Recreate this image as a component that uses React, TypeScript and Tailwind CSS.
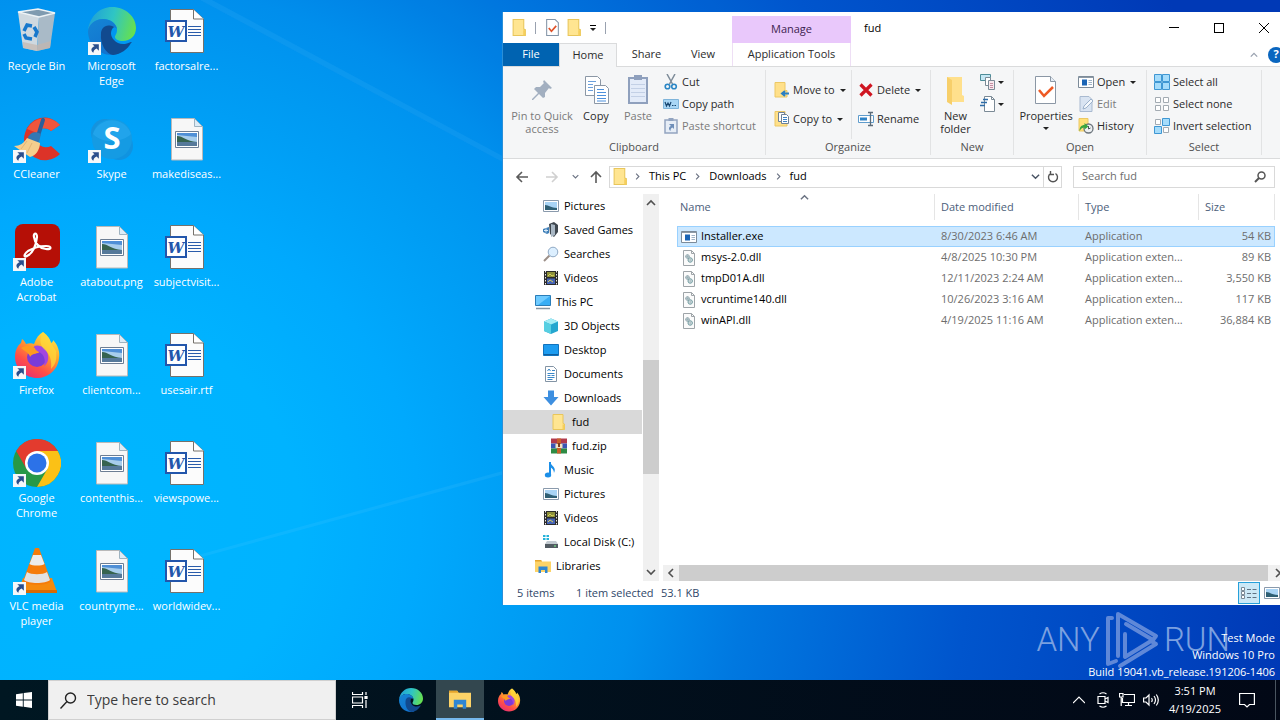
import { ReactNode, useState } from 'react';

/* ---------- Desktop icons (48px) ---------- */

function EdgeIcon({ className = 'size-12' }: { className?: string }) {
  return (
    <svg className={className} viewBox="0 0 48 48">
      <defs>
        <linearGradient id="edgeTop" x1="0" y1="0.3" x2="1" y2="0.5">
          <stop offset="0" stopColor="#1f9fd8" />
          <stop offset="0.5" stopColor="#2fc5c4" />
          <stop offset="1" stopColor="#66e04f" />
        </linearGradient>
        <linearGradient id="edgeLeft" x1="0" y1="0" x2="0.6" y2="1">
          <stop offset="0" stopColor="#1585d4" />
          <stop offset="1" stopColor="#1173cf" />
        </linearGradient>
      </defs>
      <path d="M0 23C2 9 12 0 24 0c14 0 24 10 24 21 0 8-6 13-13 13-5 0-8-2-8-4s2-3 2-7c0-6-6-11-14-11C8 12 3 16 0 23z" fill="url(#edgeTop)" />
      <path d="M0 24c1-7 7-12 15-12 7 0 13 4 14 10-3-3-9-2-11 4-2 9 5 17 15 19-3 2-6 3-9 3C10 48 0 37 0 24z" fill="url(#edgeLeft)" />
      <path d="M13 27c0-6 5-11 13-7-4 3-4 9 0 13 4 5 11 5 17 2 1 0 1 0 0 1-4 7-10 11-18 12C18 47 12 37 13 27z" fill="#114a8f" />
    </svg>
  );
}

function FirefoxIcon({ className = 'size-12' }: { className?: string }) {
  return (
    <svg className={className} viewBox="0 0 48 48">
      <defs>
        <linearGradient id="ffBody" x1="0.8" y1="0" x2="0.2" y2="1">
          <stop offset="0" stopColor="#fff04a" />
          <stop offset="0.35" stopColor="#ffa72b" />
          <stop offset="0.7" stopColor="#ff4f47" />
          <stop offset="1" stopColor="#e52a78" />
        </linearGradient>
      </defs>
      <path d="M30 1c5 4 7 7 8 11 2-1 2-2 2-3 5 5 7 12 6 18-1 12-11 20-22 20S2 38 2 26c0-6 2-11 6-14l1-4c2 1 3 3 4 5 3-1 6-1 8 0 2-6 5-10 9-12z" fill="url(#ffBody)" />
      <circle cx="24" cy="26" r="10" fill="#7b3bd8" />
      <path d="M8 17c6-4 12-1 16 1 3 1 4 3 1 4-4 1-6 1-8 4 0-3-4-5-9-9z" fill="#ff9a1f" />
      <path d="M21 15c6-2 13 2 14 9 1 5-1 9-4 11 2-6 0-12-5-14-3-1-4-3-5-6z" fill="#a246df" />
      <path d="M30 1c5 4 7 7 8 11l5 8c1 8 0 13-5 18 1-9-1-15-7-20-4-4-5-10-1-17z" fill="#ffd83b" opacity="0.75" />
    </svg>
  );
}

function RecycleIcon() {
  return (
    <svg className="size-12" viewBox="0 0 48 48">
      <path d="M5 5l21 5-2 34-14-3z" fill="#cfd9e0" />
      <path d="M26 10l16-4-5 35-13 3z" fill="#a9bac7" />
      <path d="M5 5l20-3 17 4-16 4z" fill="#7f9bb0" stroke="#edf3f6" strokeWidth="1.5" />
      <path d="M10 35l14 3 14-4-1 7-13 3-14-3z" fill="#c4b7ae" opacity="0.7" />
      <g fill="none" stroke="#1778cc" strokeWidth="3.5">
        <path d="M11 24l3-6 5 1" />
        <path d="M21 20l3 5-2 5" />
        <path d="M19 32l-6-1-2-4" />
      </g>
    </svg>
  );
}

function CCleanerIcon() {
  return (
    <svg className="size-12" viewBox="0 0 48 48">
      <path d="M47 10A20 20 0 0 0 12 18a21 21 0 0 0 35 21l-9-8a11 11 0 0 1-16-10c1-8 11-10 16-5z" fill="#dc3328" />
      <path d="M47 10A20 20 0 0 0 14 14l10 4c3-6 10-6 14-2z" fill="#f0563c" />
      <path d="M30 5l-5 16" stroke="#2a5f9b" strokeWidth="4" strokeLinecap="round" />
      <path d="M15 22c3-5 7-6 13-3l-2 8-9 2z" fill="#3278b4" />
      <path d="M14 23l13 5c0 6-4 13-10 14L1 31c6 0 10-3 13-8z" fill="#f5ce8d" />
      <path d="M14 26l-6 8m11-6l-5 10" stroke="#e3b576" />
    </svg>
  );
}

function SkypeIcon() {
  return (
    <svg className="size-12" viewBox="0 0 48 48">
      <circle cx="17" cy="18" r="14" fill="#1593dd" />
      <circle cx="31" cy="31" r="14" fill="#1093e0" />
      <circle cx="24" cy="24" r="20" fill="#159be3" />
      <path d="M5 19a20 20 0 0 1 38 0c-9 9-28 10-38 0z" fill="#2aaaf0" opacity="0.6" />
      <text x="24" y="34" textAnchor="middle" fill="#fff" fontFamily="Open Sans, sans-serif" fontWeight="700" fontSize="31">S</text>
    </svg>
  );
}

function AcrobatIcon() {
  return (
    <svg className="size-12" viewBox="0 0 48 48">
      <rect x="2" y="1" width="45" height="44" rx="8" fill="#b50f06" />
      <path d="M14 33c6-3 9-10 10-19 0-5-4-4-3 0 1 7 6 11 12 12 6 1 6-3 0-3-7 0-13 2-18 5-5 4-4 7-1 5z" fill="none" stroke="#fff" strokeWidth="2.2" strokeLinejoin="round" />
    </svg>
  );
}

function ChromeIcon() {
  return (
    <svg className="size-12" viewBox="0 0 48 48">
      <circle cx="24" cy="24" r="24" fill="#279847" />
      <path d="M3.2 12a24 24 0 0 1 41.6 0H24L13.6 30z" fill="#e33b2e" />
      <path d="M44.8 12A24 24 0 0 1 24 48l10.400-18L24 12z" fill="#fbc116" />
      <circle cx="24" cy="24" r="12" fill="#fff" />
      <circle cx="24" cy="24" r="9.500" fill="#2c72e8" />
    </svg>
  );
}

function VlcIcon() {
  return (
    <svg className="size-12" viewBox="0 0 48 48">
      <path d="M10 31h29l5 14H5z" fill="#f58a0e" />
      <path d="M5 43h39v3H5z" fill="#d86a05" />
      <path d="M22 1h4l12 33c-3 5-25 5-28 0z" fill="#f57c0b" />
      <path d="M20 8h8l3.500 9c-3 2-12 2-15 0z" fill="#ececec" />
      <path d="M14 25c4 3 16 3 20 0l3 8c-4 4-22 4-26 0z" fill="#e2e2e2" />
    </svg>
  );
}

function WordIcon() {
  return (
    <svg className="size-12" viewBox="0 0 48 48">
      <path d="M7.500 2.500h23l10 9.500v33.500h-33z" fill="#fcfcfc" stroke="#75716b" />
      <path d="M30.500 2.500V12h10" fill="#fff" stroke="#75716b" />
      <path d="M25 19.500h13M25 22.500h13M25 25.500h13M25 28.500h13" stroke="#2a5caa" />
      <rect x="3" y="14" width="20" height="20" fill="#fff" stroke="#2356ab" strokeWidth="2" />
      <text x="13" y="30" textAnchor="middle" fill="#2356ab" fontFamily="DejaVu Serif, serif" fontStyle="italic" fontWeight="700" fontSize="15">W</text>
    </svg>
  );
}

function PngIcon() {
  return (
    <svg className="size-12" viewBox="0 0 48 48">
      <path d="M8.500 3.500h23l8 8v33.500h-31z" fill="#f7f7f7" stroke="#b9b9b9" />
      <path d="M31.500 3.500v8h8z" fill="#dcecf7" stroke="#9fb3c0" />
      <path d="M12.500 16.500h23v16h-23z" fill="#fff" stroke="#6d7e94" />
      <path d="M14 18h20v13H14z" fill="#a7cdec" />
      <path d="M14 18h20v4l-20-2z" fill="#4f8fd6" />
      <path d="M14 21c6 0 9 5 20 6v1H14z" fill="#36634f" />
      <path d="M14 27h20v4H14z" fill="#56799a" />
    </svg>
  );
}

function ShortcutBadge() {
  return (
    <svg className="absolute bottom-0 left-0 size-[13px]" viewBox="0 0 12 12">
      <rect width="12" height="12" fill="#f5f7f9" />
      <path d="M4 2h6v6L8 6c-2 1-3 2-3 4-3-2-2-5 1-6z" fill="#2a4e8c" />
    </svg>
  );
}

/* ---------- Small icons (16px) ---------- */

function Svg({ children, className = 'size-4 shrink-0' }: { children: ReactNode; className?: string }) {
  return (
    <svg className={className} viewBox="0 0 16 16" fill="none">
      {children}
    </svg>
  );
}

const FolderIcon = ({ className }: { className?: string }) => (
  <Svg className={className}>
    <path d="M2 .5h10v9l1.500.5v5.500H2z" fill="#ffe591" stroke="#e9c65a" />
    <path d="M11.500 10.500h2v5h-2z" fill="#f6cf5b" />
  </Svg>
);
const CheckDocIcon = ({ className }: { className?: string }) => (
  <Svg className={className}>
    <path d="M2.500.5h8l3 3v12h-11z" fill="#fff" stroke="#8496a8" />
    <path d="M4.500 8.500l2.500 3 4.500-5" stroke="#e0532b" strokeWidth="1.600" />
  </Svg>
);
const PictureIcon = () => (
  <Svg>
    <path d="M.5 2.500h15v11H.5z" fill="#fff" stroke="#8a9aac" />
    <path d="M2 4h12v8H2z" fill="#a9d4f5" />
    <path d="M2 7c4 0 6 3 12 3v2H2z" fill="#2f5f74" />
  </Svg>
);
const GamesIcon = () => (
  <Svg>
    <path d="M6 2l5-2 4 3v7l-4 5-4-3z" fill="#3f474f" />
    <path d="M8 2l4 1v10l-4 2z" fill="#a9b7c4" />
    <path d="M0 7l6-2v6l-2 1-4-2z" fill="#3f7fb8" />
    <path d="M1 8.500h4M3 6.500v4" stroke="#d9ebf8" />
  </Svg>
);
const SearchesIcon = () => (
  <Svg>
    <path d="M1 15l5.500-5.500" stroke="#9c8f88" strokeWidth="2" />
    <circle cx="10" cy="6" r="4.800" fill="#dcefff" stroke="#8fa9c4" />
  </Svg>
);
const VideoIcon = () => (
  <Svg>
    <path d="M1 1h14v14H1z" fill="#2b2b2b" />
    <path d="M4 2h8v5H4z" fill="#8c8f3a" />
    <path d="M4 8.500h8V14H4z" fill="#4663b5" />
    <path d="M2.500 1v14M13.500 1v14" stroke="#e9e9e9" strokeDasharray="1.500 1.500" />
    <path d="M5 6l2-2 2 2 2-1M5 12l2-2 3 2" stroke="#d8d45a" />
  </Svg>
);
const PcIcon = () => (
  <Svg>
    <path d="M.5 1.500h15v10H.5z" fill="#39aef5" stroke="#2a7db8" />
    <path d="M1 2h14L3 11H1z" fill="#6fcbff" />
    <path d="M1 14.500h14" stroke="#8795a1" strokeWidth="1.500" />
  </Svg>
);
const CubeIcon = () => (
  <Svg>
    <path d="M1 3.500L8 .5l7 3v9.500l-7 3-7-3z" fill="#25a6cf" />
    <path d="M1 3.500L8 .5l7 3-7 3z" fill="#a5edf5" />
    <path d="M1 3.500l7 3V16l-7-3z" fill="#57cfe2" />
  </Svg>
);
const DesktopIcon = () => (
  <Svg>
    <path d="M.5 2.500h15v11H.5z" fill="#1d9cf0" stroke="#1273bd" />
    <path d="M1 12.500h14" stroke="#0f5f9f" />
  </Svg>
);
const DocumentIcon = () => (
  <Svg>
    <path d="M2.500.5h8l3 3v12h-11z" fill="#fff" stroke="#8394a5" />
    <path d="M4.500 5l1.500-2 1.500 2M9 4.500h3M4.500 7.500h7M4.500 9.500h3m1 0h3M4.500 11.500h7M4.500 13.500h5" stroke="#3a87c8" />
  </Svg>
);
const DownloadIcon = () => (
  <Svg>
    <path d="M5 .5h6V7h4.500L8 15.500.5 7H5z" fill="#3d8fe0" />
  </Svg>
);
const ZipIcon = () => (
  <Svg>
    <path d="M0 .5h16v5H0z" fill="#b13a4c" />
    <path d="M0 5.500h16v5H0z" fill="#3a55b3" />
    <path d="M0 10.500h16v5H0z" fill="#2e8b44" />
    <path d="M6 .5h4v15H6z" fill="#c9602b" />
    <path d="M4.500 6h7v4h-7z" fill="#f1e2c4" />
    <path d="M7 5h2v4H7z" fill="#7a3c22" />
  </Svg>
);
const MusicIcon = () => (
  <Svg>
    <ellipse cx="5" cy="13" rx="3.200" ry="2.500" fill="#1c8fe8" />
    <path d="M7 0v13" stroke="#1c8fe8" strokeWidth="2" />
    <path d="M7 0c1 4 7 5 4 11 0-3-2-5-4-6z" fill="#1c8fe8" />
  </Svg>
);
const DiskIcon = () => (
  <Svg>
    <path d="M0 1h2.500v2H0zm3.500 0H6v2H3.500zM0 4h2.500v2H0zm3.500 0H6v2H3.500z" fill="#25b3d9" />
    <path d="M4 7h9l2 3H2z" fill="#c2cad0" />
    <path d="M2 10h13v4H2z" fill="#525b62" />
    <path d="M11 12h2" stroke="#7dff8d" />
  </Svg>
);
const LibraryIcon = ({ className }: { className?: string }) => (
  <Svg className={className}>
    <path d="M0 2h6l1 1.500h9V14H0z" fill="#fdd367" />
    <path d="M0 2h6l1 1.500H0z" fill="#e6a52c" />
    <path d="M3.500 15V8.500h9V15h-2.500v-3H6v3z" fill="#2f86d2" />
  </Svg>
);
const ExeIcon = () => (
  <Svg>
    <path d="M.5 2.500h15v11H.5z" fill="#fff" stroke="#7c8b99" />
    <path d="M.5 3.500h15" stroke="#8d9aa6" />
    <path d="M4 5.500h5v6H4z" fill="#1b65b5" />
    <path d="M10.500 6.500h3.500m-3.500 2h3.500m-3.500 2h3.500" stroke="#9fb3c6" />
  </Svg>
);
const DllIcon = () => (
  <Svg>
    <path d="M2.500.5h8l3 3v12h-11z" fill="#fbfbfb" stroke="#9ea4a8" />
    <path d="M10.500.5v3h3" stroke="#9ea4a8" />
    <circle cx="6.500" cy="6.500" r="1.800" stroke="#8aa0a8" />
    <circle cx="9.200" cy="10" r="2.200" stroke="#6c9a9e" />
    <path d="M4.500 6.500h4M6.500 4.500v4M6.800 10h5M9.200 7.500v5" stroke="#8fa9b0" strokeWidth=".7" />
  </Svg>
);
const CutIcon = () => (
  <Svg>
    <path d="M4 0l5.500 10M12 0L6.500 10" stroke="#7d8b98" strokeWidth="1.500" />
    <circle cx="4.500" cy="12.500" r="2.300" stroke="#2b86c5" strokeWidth="1.600" />
    <circle cx="11" cy="12.500" r="2.300" stroke="#2b86c5" strokeWidth="1.600" />
  </Svg>
);
const CopyPathIcon = () => (
  <Svg>
    <path d="M.5 3.500h15v9H.5z" fill="#a9d6f5" stroke="#7fb4da" />
    <path d="M2 6l1.500 4L5 7l1.500 3L8 6M9 9.500h1.500m1 0h1.500" stroke="#17456f" strokeWidth="1.200" />
  </Svg>
);
const PasteShortcutIcon = () => (
  <Svg>
    <path d="M2 2h12v13H2z" fill="#e6edf6" stroke="#92a4c0" strokeWidth="1.500" />
    <path d="M5.500 0h5v3h-5z" fill="#92a4c0" />
    <path d="M6 6h5v5L9.500 9.500C8 10 7.500 11 7.500 13 5 11 6 8.500 8 8z" fill="#6f8fb9" />
  </Svg>
);
const MoveIcon = () => (
  <Svg>
    <path d="M1 .5h10v8h2V15H1z" fill="#ffe08a" stroke="#ecc864" />
    <path d="M15 11.500H9M11 9l-3 2.500 3 2.500" stroke="#2b7fc2" strokeWidth="2" />
  </Svg>
);
const CopyToIcon = () => (
  <Svg>
    <path d="M1 .5h10v8h2V15H1z" fill="#ffe08a" stroke="#ecc864" />
    <path d="M4.500 1.500h6v9h-6z" fill="#fff" stroke="#6f8196" />
    <path d="M7.500 3.500h5l2 2v7h-7z" fill="#fff" stroke="#6f8196" />
    <path d="M9 6.500h4M9 8.500h4M9 10.500h4" stroke="#3f83c4" />
  </Svg>
);
const DeleteIcon = () => (
  <Svg>
    <path d="M2.500 2.500l11 11M13.500 2.500l-11 11" stroke="#cf1521" strokeWidth="3.200" />
  </Svg>
);
const RenameIcon = () => (
  <Svg>
    <path d="M.5 4.500h15v7H.5z" fill="#fff" stroke="#5f9ccc" />
    <path d="M2 6.500h7v3H2z" fill="#2f83c6" />
    <path d="M10 1.500h5M12.500 1.500v13M10 14.500h5" stroke="#5b6b79" strokeWidth="1.300" />
  </Svg>
);
const NewItemIcon = () => (
  <Svg>
    <path d="M.5.5h10v6H.5z" fill="#c5e7f4" stroke="#4d8c98" />
    <path d="M5.500 3.500h5v8h-5z" fill="#fff" stroke="#7b8a96" />
    <path d="M8.500 6.500h6v9h-6z" fill="#f8e9ee" stroke="#7b8a96" />
    <path d="M10 9.500h3m-3 2h3m-3 2h3" stroke="#c48ea2" />
  </Svg>
);
const EasyAccessIcon = () => (
  <Svg>
    <path d="M4.500.5h7l3 3v12h-10z" fill="#fff" stroke="#7b8a96" />
    <path d="M11.500.5v3h3" stroke="#7b8a96" />
    <path d="M3 3.500h5M1 6.500h6M0 9.500h5" stroke="#2f6da8" strokeWidth="1.300" />
  </Svg>
);
const EditIcon = () => (
  <Svg>
    <path d="M2 .5h9l3 3V15.500H2z" fill="#d9e4f2" stroke="#a9bad0" />
    <path d="M5 13l1-3 7-7 2 2-7 7z" fill="#f4f8fc" stroke="#9cb1cb" />
  </Svg>
);
const HistoryIcon = () => (
  <Svg>
    <path d="M1 .5h9V13H1z" fill="#ffe178" stroke="#ecc864" />
    <circle cx="10.500" cy="10.500" r="4.500" fill="#eef1f3" stroke="#6c757c" strokeWidth="1.300" />
    <path d="M10.500 8v3l2-1" stroke="#4b545b" />
    <path d="M1.500 13c0-4 2-6 5-6V5l4 3.500-4 3V9.500c-2 0-3.500 1-5 3.500z" fill="#39a53e" />
  </Svg>
);
const SelectAllIcon = () => (
  <Svg>
    <path d="M.5.5h7v7h-7zM8.500.5h7v7h-7zM.5 8.500h7v7h-7zM8.500 8.500h7v7h-7z" fill="#a5dcfb" stroke="#3f97d3" />
  </Svg>
);
const SelectNoneIcon = () => (
  <Svg>
    <path d="M1.500 1.500h5v5h-5zM9.500 1.500h5v5h-5zM1.500 9.500h5v5h-5zM9.500 9.500h5v5h-5z" fill="#fff" stroke="#a3abb2" />
  </Svg>
);
const InvertIcon = () => (
  <Svg>
    <path d="M1.500 1.500h5v5h-5zM9.500 9.500h5v5h-5z" fill="#fff" stroke="#a3abb2" />
    <path d="M8.500.5h7v7h-7zM.5 8.500h7v7h-7z" fill="#a5dcfb" stroke="#3f97d3" />
  </Svg>
);

const Caret = () => (
  <svg className="h-[3px] w-[6px] shrink-0" viewBox="0 0 6 3">
    <path d="M0 0h6L3 3z" fill="#222" />
  </svg>
);

type Dir = 'up' | 'down' | 'left' | 'right';
const chevrons: Record<Dir, string> = {
  up: 'M1 7l4-4 4 4',
  down: 'M1 3l4 4 4-4',
  left: 'M7 1L3 5l4 4',
  right: 'M3 1l4 4-4 4',
};
const Chevron = ({ dir, className }: { dir: Dir; className: string }) => (
  <svg className={className} viewBox="0 0 10 10" fill="none" stroke="currentColor" strokeWidth="1.600">
    <path d={chevrons[dir]} />
  </svg>
);

/* ---------- Data ---------- */

const desktopItems: { label: string; icon: ReactNode; shortcut?: boolean }[] = [
  { label: 'Recycle Bin', icon: <RecycleIcon /> },
  { label: 'CCleaner', icon: <CCleanerIcon />, shortcut: true },
  { label: 'Adobe Acrobat', icon: <AcrobatIcon />, shortcut: true },
  { label: 'Firefox', icon: <FirefoxIcon />, shortcut: true },
  { label: 'Google Chrome', icon: <ChromeIcon />, shortcut: true },
  { label: 'VLC media player', icon: <VlcIcon />, shortcut: true },
  { label: 'Microsoft Edge', icon: <EdgeIcon />, shortcut: true },
  { label: 'Skype', icon: <SkypeIcon />, shortcut: true },
  { label: 'atabout.png', icon: <PngIcon /> },
  { label: 'clientcom...', icon: <PngIcon /> },
  { label: 'contenthis...', icon: <PngIcon /> },
  { label: 'countryme...', icon: <PngIcon /> },
  { label: 'factorsalre...', icon: <WordIcon /> },
  { label: 'makediseas...', icon: <PngIcon /> },
  { label: 'subjectvisit...', icon: <WordIcon /> },
  { label: 'usesair.rtf', icon: <WordIcon /> },
  { label: 'viewspowe...', icon: <WordIcon /> },
  { label: 'worldwidev...', icon: <WordIcon /> },
];

const treeItems: { label: string; icon: ReactNode; level: number }[] = [
  { label: 'Pictures', icon: <PictureIcon />, level: 2 },
  { label: 'Saved Games', icon: <GamesIcon />, level: 2 },
  { label: 'Searches', icon: <SearchesIcon />, level: 2 },
  { label: 'Videos', icon: <VideoIcon />, level: 2 },
  { label: 'This PC', icon: <PcIcon />, level: 1 },
  { label: '3D Objects', icon: <CubeIcon />, level: 2 },
  { label: 'Desktop', icon: <DesktopIcon />, level: 2 },
  { label: 'Documents', icon: <DocumentIcon />, level: 2 },
  { label: 'Downloads', icon: <DownloadIcon />, level: 2 },
  { label: 'fud', icon: <FolderIcon className="size-4 shrink-0" />, level: 3 },
  { label: 'fud.zip', icon: <ZipIcon />, level: 3 },
  { label: 'Music', icon: <MusicIcon />, level: 2 },
  { label: 'Pictures', icon: <PictureIcon />, level: 2 },
  { label: 'Videos', icon: <VideoIcon />, level: 2 },
  { label: 'Local Disk (C:)', icon: <DiskIcon />, level: 2 },
  { label: 'Libraries', icon: <LibraryIcon />, level: 1 },
];

const indent: Record<number, string> = { 1: 'pl-8', 2: 'pl-10', 3: 'pl-12' };

const files = [
  { name: 'Installer.exe', date: '8/30/2023 6:46 AM', type: 'Application', size: '54 KB' },
  { name: 'msys-2.0.dll', date: '4/8/2025 10:30 PM', type: 'Application exten...', size: '89 KB' },
  { name: 'tmpD01A.dll', date: '12/11/2023 2:24 AM', type: 'Application exten...', size: '3,550 KB' },
  { name: 'vcruntime140.dll', date: '10/26/2023 3:16 AM', type: 'Application exten...', size: '117 KB' },
  { name: 'winAPI.dll', date: '4/19/2025 11:16 AM', type: 'Application exten...', size: '36,884 KB' },
];

/* ---------- Window parts ---------- */

function TitleBar() {
  return (
    <header className="flex h-[31px] shrink-0">
      <div className="flex w-[229px] items-center pl-2">
        <FolderIcon className="size-[17px]" />
        <span className="ml-[7px] h-3 w-px bg-gray-400" />
        <button aria-label="Properties" className="ml-2"><CheckDocIcon className="size-[17px]" /></button>
        <button aria-label="New folder" className="ml-[5px]"><FolderIcon className="size-[17px]" /></button>
        <button aria-label="Customize Quick Access Toolbar" className="ml-1 flex w-3 flex-col items-center gap-[2px]">
          <span className="h-px w-[6px] bg-black" />
          <Caret />
        </button>
        <span className="ml-[6px] h-3 w-px bg-gray-400" />
      </div>
      <div className="mt-1 flex w-[119px] items-center justify-center bg-[#e9c8fb] text-[#3d2350]">Manage</div>
      <h1 className="flex-1 pl-[13px] leading-8 text-black">fud</h1>
      <div className="flex text-black">
        <button aria-label="Minimize" className="flex w-[45px] items-center justify-center">
          <span className="h-px w-[10px] bg-black" />
        </button>
        <button aria-label="Maximize" className="flex w-[45px] items-center justify-center">
          <span className="size-[10px] border border-black" />
        </button>
        <button aria-label="Close" className="flex w-[46px] items-center justify-center">
          <svg className="size-[10px]" viewBox="0 0 10 10" stroke="#000"><path d="M0 0l10 10M10 0L0 10" /></svg>
        </button>
      </div>
    </header>
  );
}

function TabBar() {
  return (
    <nav className="flex h-6 shrink-0 border-b border-[#dadbdc]">
      <button className="w-14 bg-[#0063b1] text-white">File</button>
      <button className="-mb-px w-[58px] border border-b-0 border-[#dadbdc] bg-[#f5f6f7]">Home</button>
      <button className="w-[59px]">Share</button>
      <button className="w-[54px]">View</button>
      <button className="ml-[2px] w-[119px] border-x border-[#eedff5]">Application Tools</button>
      <div className="flex flex-1 items-center justify-end pr-[3px]">
        <button aria-label="Collapse ribbon"><Chevron dir="up" className="size-2 text-gray-400" /></button>
        <button aria-label="Help" className="ml-[10px] flex size-4 items-center justify-center rounded-full bg-[#0a66bf] font-bold text-white">?</button>
      </div>
    </nav>
  );
}

function Group({ title, className, children }: { title: string; className: string; children: ReactNode }) {
  return (
    <section className={`my-[3px] flex shrink-0 flex-col border-r border-[#e2e3e4] ${className}`}>
      <div className="flex h-[72px]">{children}</div>
      <h2 className="text-center leading-4 text-[#505050]">{title}</h2>
    </section>
  );
}

function SmallButton({ icon, label, caret, disabled }: { icon: ReactNode; label: string; caret?: boolean; disabled?: boolean }) {
  return (
    <button className={`flex h-[22px] items-center gap-[3px] whitespace-nowrap ${disabled ? 'text-[#7a7a7a]' : ''}`}>
      {icon}
      <span>{label}</span>
      {caret && <span className="pl-[2px]"><Caret /></span>}
    </button>
  );
}

function BigButton({ icon, children, className, disabled }: { icon: ReactNode; children: ReactNode; className: string; disabled?: boolean }) {
  return (
    <button className={`flex flex-col items-center pt-1 leading-[13px] ${disabled ? 'text-[#7a7a7a]' : ''} ${className}`}>
      {icon}
      <span className="mt-[3px] flex flex-col items-center">{children}</span>
    </button>
  );
}

function Ribbon() {
  return (
    <div className="flex h-[92px] shrink-0 border-b border-[#dadbdc] bg-[#f5f6f7]">
      <Group title="Clipboard" className="w-[263px]">
        <BigButton
          className="ml-[2px] w-[74px]"
          disabled
          icon={
            <svg className="size-8" viewBox="0 0 32 32">
              <path d="M18 6l8 8-2 1-1-1-4 5v4l-2 1-4-4-6 6h-1v-1l6-6-4-4 2-2h4l4-4-1-1z" fill="#a2afc0" />
            </svg>
          }
        >
          <span className="whitespace-nowrap">Pin to Quick</span>
          <span>access</span>
        </BigButton>
        <BigButton
          className="w-[34px]"
          icon={
            <svg className="size-8" viewBox="0 0 32 32" fill="#fff">
              <path d="M5.500 2.500h12l3 3v16h-15z" stroke="#8b97a5" />
              <path d="M8 7.500h8M8 10.500h5M8 13.500h5M8 16.500h5" stroke="#6ca0dc" />
              <path d="M14.500 11.500h11l3 3v15h-14z" stroke="#8b97a5" />
              <path d="M17 15.500h7M17 18.500h9M17 21.500h9M17 24.500h9M17 27h9" stroke="#4d90dc" />
            </svg>
          }
        >
          Copy
        </BigButton>
        <BigButton
          className="w-[50px]"
          disabled
          icon={
            <svg className="size-8" viewBox="0 0 32 32">
              <path d="M7 4h18v25H7z" fill="#e3ebf9" stroke="#8fa0bd" strokeWidth="2" />
              <path d="M12 1h8v5h-8z" fill="#8fa0bd" />
              <path d="M9 10.500h14M9 14.500h14M9 18.500h14M9 22.500h14" stroke="#c3d0e6" />
            </svg>
          }
        >
          Paste
        </BigButton>
        <div className="flex flex-col pt-px">
          <SmallButton icon={<CutIcon />} label="Cut" />
          <SmallButton icon={<CopyPathIcon />} label="Copy path" />
          <SmallButton icon={<PasteShortcutIcon />} label="Paste shortcut" disabled />
        </div>
      </Group>

      <Group title="Organize" className="w-[165px]">
        <div className="flex w-[86px] flex-col gap-[7px] border-r border-[#e2e3e4] pt-[9px] pl-2">
          <SmallButton icon={<MoveIcon />} label="Move to" caret />
          <SmallButton icon={<CopyToIcon />} label="Copy to" caret />
        </div>
        <div className="flex flex-col gap-[7px] pt-[9px] pl-[6px]">
          <SmallButton icon={<DeleteIcon />} label="Delete" caret />
          <SmallButton icon={<RenameIcon />} label="Rename" />
        </div>
      </Group>

      <Group title="New" className="w-[83px]">
        <BigButton
          className="w-[49px]"
          icon={
            <svg className="size-8" viewBox="0 0 32 32">
              <path d="M7 3h15v18l2 1v6H7z" fill="#ffe08c" />
              <path d="M7 3l5 3v25l-5-3z" fill="#f7cf6a" />
            </svg>
          }
        >
          <span>New</span>
          <span>folder</span>
        </BigButton>
        <div className="flex flex-col pt-px">
          <button aria-label="New item" className="flex h-[22px] items-center gap-[2px]"><NewItemIcon /><Caret /></button>
          <button aria-label="Easy access" className="flex h-[22px] items-center gap-[2px]"><EasyAccessIcon /><Caret /></button>
        </div>
      </Group>

      <Group title="Open" className="w-[133px]">
        <BigButton
          className="w-16"
          icon={
            <svg className="size-8" viewBox="0 0 32 32">
              <path d="M5.500 2.500h15l5 5v22h-20z" fill="#fff" stroke="#8b97a5" />
              <path d="M20.500 2.500v5h5" fill="#e6eef5" stroke="#8b97a5" />
              <path d="M9 16l5 6 9-9" fill="none" stroke="#ee5a24" strokeWidth="2.500" />
            </svg>
          }
        >
          <span>Properties</span>
          <span className="flex h-[13px] items-center"><Caret /></span>
        </BigButton>
        <div className="flex flex-col pt-px">
          <SmallButton icon={<ExeIcon />} label="Open" caret />
          <SmallButton icon={<EditIcon />} label="Edit" disabled />
          <SmallButton icon={<HistoryIcon />} label="History" />
        </div>
      </Group>

      <Group title="Select" className="w-[115px]">
        <div className="flex flex-col pt-px pl-[7px]">
          <SmallButton icon={<SelectAllIcon />} label="Select all" />
          <SmallButton icon={<SelectNoneIcon />} label="Select none" />
          <SmallButton icon={<InvertIcon />} label="Invert selection" />
        </div>
      </Group>
    </div>
  );
}

const NavArrow = ({ d, className }: { d: string; className: string }) => (
  <svg className={`size-[14px] ${className}`} viewBox="0 0 14 14" fill="none" stroke="currentColor" strokeWidth="1.600">
    <path d={d} />
  </svg>
);

function AddressRow() {
  return (
    <div className="flex h-[35px] shrink-0 items-center pr-3">
      <div className="flex w-[106px] items-center pl-3">
        <button aria-label="Back"><NavArrow className="text-[#5a5a5a]" d="M13 7H2M7 2L2 7l5 5" /></button>
        <button aria-label="Forward" className="ml-4"><NavArrow className="text-[#d0d0d0]" d="M1 7h11M7 2l5 5-5 5" /></button>
        <button aria-label="Recent locations" className="ml-[13px]"><Chevron dir="down" className="size-[7px] text-gray-500" /></button>
        <button aria-label="Up" className="ml-[10px]"><NavArrow className="text-[#5a5a5a]" d="M7 13V2M2 7l5-5 5 5" /></button>
      </div>
      <div className="flex h-[22px] flex-1 items-center border border-[#d9d9d9] pl-[2px] text-black">
        <FolderIcon className="size-[17px]" />
        <Chevron dir="right" className="ml-[5px] size-[7px] text-gray-500" />
        <button className="px-2">This PC</button>
        <Chevron dir="right" className="size-[7px] text-gray-500" />
        <button className="px-2">Downloads</button>
        <Chevron dir="right" className="size-[7px] text-gray-500" />
        <button className="px-2">fud</button>
        <button aria-label="Previous locations" className="ml-auto px-[3px]"><Chevron dir="down" className="size-[9px] text-gray-600" /></button>
        <button aria-label="Refresh" className="flex h-full w-[18px] items-center justify-center border-l border-[#d9d9d9]">
          <svg className="size-3" viewBox="0 0 12 12" fill="none" stroke="#555" strokeWidth="1.400">
            <path d="M8.500 2.500a4.500 4.500 0 1 1-5 0M3.500 0v3.500H7" />
          </svg>
        </button>
      </div>
      <label className="ml-[11px] flex h-[22px] w-[202px] items-center border border-[#d9d9d9] px-2">
        <input aria-label="Search fud" placeholder="Search fud" className="min-w-0 flex-1 outline-none placeholder:text-[#6d6d6d]" />
        <svg className="size-3" viewBox="0 0 12 12" fill="none" stroke="#555" strokeWidth="1.500">
          <circle cx="7.500" cy="4.500" r="3.500" />
          <path d="M5 7L1 11" strokeWidth="2" />
        </svg>
      </label>
    </div>
  );
}

function Tree() {
  const [active, setActive] = useState(9);
  return (
    <aside className="flex w-[156px] shrink-0">
      <ul className="w-[139px] text-black">
        {treeItems.map((item, i) => (
          <li key={i}>
            <button
              onClick={() => setActive(i)}
              className={`flex h-6 w-full items-center gap-[5px] whitespace-nowrap ${indent[item.level]} ${i === active ? 'bg-[#d9d9d9]' : ''}`}
            >
              {item.icon}
              {item.label}
            </button>
          </li>
        ))}
      </ul>
      <div className="ml-px flex w-4 flex-col items-center bg-[#f0f0f0] text-[#505050]">
        <Chevron dir="up" className="my-1 size-[10px] shrink-0" />
        <div className="mt-[148px] h-[114px] w-full bg-[#cdcdcd]" />
        <Chevron dir="down" className="mt-auto mb-1 size-[10px] shrink-0" />
      </div>
    </aside>
  );
}

function FileList() {
  const [selected, setSelected] = useState('Installer.exe');
  return (
    <div className="flex min-w-0 flex-1 flex-col">
      <div className="relative flex-1 pr-3 pl-[18px]">
        <Chevron dir="up" className="absolute -top-px left-[141px] size-[9px] text-gray-500" />
        <table className="w-full table-fixed border-separate border-spacing-0">
          <thead className="text-left text-[#4c607a]">
            <tr className="h-[26px]">
              <th className="border-r border-[#e5e5e5] pl-[3px] font-normal">Name</th>
              <th className="w-36 border-r border-[#e5e5e5] pl-[6px] font-normal">Date modified</th>
              <th className="w-[120px] border-r border-[#e5e5e5] pl-[6px] font-normal">Type</th>
              <th className="w-[76px] border-r border-[#e5e5e5] pl-[6px] font-normal">Size</th>
            </tr>
          </thead>
          <tbody className="text-[#6d6d6d] before:block before:h-[6px]">
            {files.map((file) => {
              const cell = file.name === selected ? 'border-y border-[#99d1ff] bg-[#cce8ff]' : 'border-y border-transparent';
              return (
                <tr key={file.name} onClick={() => setSelected(file.name)} className="h-[21px]">
                  <td className={`border-l p-0 pl-[3px] text-black ${cell}`}>
                    <span className="flex items-center gap-1">
                      {file.name.endsWith('.exe') ? <ExeIcon /> : <DllIcon />}
                      {file.name}
                    </span>
                  </td>
                  <td className={`p-0 pl-[6px] ${cell}`}>{file.date}</td>
                  <td className={`p-0 pl-[6px] ${cell}`}>{file.type}</td>
                  <td className={`border-r p-0 pr-[3px] text-right ${cell}`}>{file.size}</td>
                </tr>
              );
            })}
          </tbody>
        </table>
      </div>
      <div className="ml-1 flex h-4 items-center bg-[#f0f0f0] text-[#505050]">
        <Chevron dir="left" className="mx-[3px] size-[10px] shrink-0" />
        <div className="h-full flex-1 bg-[#cdcdcd]" />
        <Chevron dir="right" className="mr-1 ml-[5px] size-[10px] shrink-0" />
      </div>
    </div>
  );
}

function StatusBar() {
  return (
    <footer className="flex h-6 shrink-0 items-center pr-[7px] pl-[14px] text-[#2f4668]">
      <span className="w-[59px]">5 items</span>
      <span className="w-[85px]">1 item selected</span>
      <span>53.1 KB</span>
      <button aria-label="Details view" className="ml-auto flex h-[22px] w-[22px] items-center justify-center border border-[#26a0da] bg-[#cbe8f6]">
        <svg className="size-4" viewBox="0 0 16 16" fill="#fff">
          <path d="M.5 2.500h3v3h-3zM.5 6.500h3v3h-3zM.5 10.500h3v3h-3z" stroke="#7b8a96" />
          <path d="M6 4.500h4m1.500 0h4M6 8.500h4m1.500 0h4M6 12.500h4m1.500 0h4" stroke="#5f7282" />
        </svg>
      </button>
      <button aria-label="Large icons view" className="ml-1"><PictureIcon /></button>
    </footer>
  );
}

function ExplorerWindow() {
  return (
    <div className="absolute top-3 -right-[7px] bottom-[75px] left-[502px] flex flex-col border-l border-[#2a8fd8] bg-white text-[#2b2b2b]">
      <TitleBar />
      <TabBar />
      <Ribbon />
      <AddressRow />
      <div className="flex min-h-0 flex-1">
        <Tree />
        <FileList />
      </div>
      <StatusBar />
    </div>
  );
}

function Watermark() {
  return (
    <>
      <div className="absolute right-[50px] bottom-2 flex items-center gap-1 font-['Roboto',sans-serif] text-[33px] leading-[64px] font-light text-[#7ba0e0]">
        <span>ANY</span>
        <svg className="h-[60px] w-14" viewBox="0 0 56 60" fill="none" stroke="#5f88d8" strokeWidth="4" strokeLinejoin="round" strokeLinecap="round">
          <path d="M8 8H4v46l8-3M14 46V4l38 22-3 4L22 14M16 56l36-22-5-3-26 16V24" />
        </svg>
        <span>RUN</span>
      </div>
      <div className="absolute right-[5px] bottom-0 text-right leading-[17px] text-white">
        <p>Test Mode</p>
        <p>Windows 10 Pro</p>
        <p>Build 19041.vb_release.191206-1406</p>
      </div>
    </>
  );
}

function Taskbar() {
  return (
    <footer className="flex h-10 shrink-0 bg-linear-to-r from-[#001722] to-[#020816] text-white">
      <button aria-label="Start" className="flex w-12 items-center justify-center">
        <svg className="size-4" viewBox="0 0 16 16" fill="#fff">
          <path d="M0 2.200L6.800 1.300v6.200H0zM7.700 1.100L16 0v7.500H7.700zM0 8.400h6.800v6.300L0 13.700zM7.700 8.400H16V16l-8.300-1.200z" />
        </svg>
      </button>
      <label className="flex w-72 items-center border border-[#d0d0d0] bg-[#f0f0f0] pl-[11px]">
        <svg className="size-[17px]" viewBox="0 0 17 17" fill="none" stroke="#222" strokeWidth="1.400">
          <circle cx="10.500" cy="6" r="5" />
          <path d="M7 9.500L.5 16.500" />
        </svg>
        <input aria-label="Type here to search" placeholder="Type here to search" className="ml-[10px] min-w-0 flex-1 text-sm outline-none placeholder:text-[#3c3c3c]" />
      </label>
      <button aria-label="Task View" className="flex w-12 items-center justify-center">
        <svg className="size-4" viewBox="0 0 16 16" fill="none" stroke="#fff" strokeWidth="1.200">
          <path d="M.5 0v2.500h10V0M.5 5h10v6H.5zM.5 16v-2.500h10V16M14 0v3M14 8v8" />
          <path d="M13 4.500h2v2h-2z" fill="#fff" />
        </svg>
      </button>
      <button aria-label="Microsoft Edge" className="ml-[2px] flex w-[50px] items-center justify-center"><EdgeIcon className="size-6" /></button>
      <button aria-label="File Explorer" className="flex w-12 items-center justify-center border-b-2 border-[#76b9ed] bg-[#33474f]">
        <LibraryIcon className="size-[22px]" />
      </button>
      <button aria-label="Firefox" className="flex w-[50px] items-center justify-center"><FirefoxIcon className="size-6" /></button>
      <div className="ml-auto flex items-center">
        <button aria-label="Show hidden icons" className="w-6">
          <svg className="mx-auto size-3" viewBox="0 0 12 12" fill="none" stroke="#fff" strokeWidth="1.200"><path d="M0 9l6-6 6 6" /></svg>
        </button>
        <button aria-label="Meet Now" className="w-6">
          <svg className="mx-auto size-4" viewBox="0 0 16 16" fill="none" stroke="#fff" strokeWidth="1.200">
            <path d="M3 4.500h7v7H3zM10 7l3-1.500v5L10 9M4.500 2Q8-.5 11.500 2M4.500 14q3.500 2.500 7 0" />
          </svg>
        </button>
        <button aria-label="Network" className="w-6">
          <svg className="mx-auto size-4" viewBox="0 0 16 16" fill="none" stroke="#fff" strokeWidth="1.200">
            <path d="M5 2.500h10.500v8H3.500V6M.5 1.500H4V5H.5zM2.200 5v9M6 13.500h7M9.500 10.500v3" />
          </svg>
        </button>
        <button aria-label="Volume" className="w-6">
          <svg className="mx-auto size-4" viewBox="0 0 16 16" fill="none" stroke="#fff" strokeWidth="1.200">
            <path d="M.6 6H3l3-3v10L3 10H.6zM8.500 6q1.500 2 0 4M11 4q3 4 0 8M13.300 2.500q4 5.500 0 11" />
          </svg>
        </button>
        <div className="flex w-16 flex-col items-center leading-[18px]">
          <span>3:51 PM</span>
          <span>4/19/2025</span>
        </div>
        <button aria-label="Notifications" className="w-10">
          <svg className="mx-auto size-4" viewBox="0 0 16 16" fill="none" stroke="#fff" strokeWidth="1.200">
            <path d="M.6 1.500h14.800v11H10.500L8 15l-2.500-2.500H.6z" />
          </svg>
        </button>
        <button aria-label="Show desktop" className="ml-2 h-10 w-[5px] border-l border-[#4a5560]" />
      </div>
    </footer>
  );
}

export default function App() {
  return (
    <div className="flex h-screen flex-col overflow-hidden font-['Open_Sans','Noto_Sans',sans-serif] text-[11px]">
      <main className="relative flex-1 overflow-hidden bg-[radial-gradient(circle_at_100px_520px,#00b6ff_0px,#00b3ff_200px,#00a9fd_320px,#009af2_460px,#0090ee_540px,#0078e0_650px,#0055cd_870px,#0039b6_1190px)]">
        {/* light beams of the wallpaper */}
        <svg className="absolute inset-0 h-full w-full" viewBox="0 0 1280 680" preserveAspectRatio="none">
          <path d="M200 0L760 300V294L212 0z" fill="#5fc4ff" opacity="0.120" />
          <path d="M200 0L760 300V0z" fill="#0050c8" opacity="0.030" />
          <path d="M180 560L760 400V404L180 563z" fill="#7fd8ff" opacity="0.100" />
        </svg>
        <div className="relative -ml-px grid w-[225px] auto-cols-[75px] grid-flow-col grid-rows-[repeat(6,108px)]">
          {desktopItems.map((item) => (
            <button key={item.label} className="flex flex-col items-center gap-[3px] self-start pt-[7px] leading-[15px] text-white">
              <span className="relative">
                {item.icon}
                {item.shortcut && <ShortcutBadge />}
              </span>
              <span className="px-1">{item.label}</span>
            </button>
          ))}
        </div>
        <Watermark />
        <ExplorerWindow />
      </main>
      <Taskbar />
    </div>
  );
}
